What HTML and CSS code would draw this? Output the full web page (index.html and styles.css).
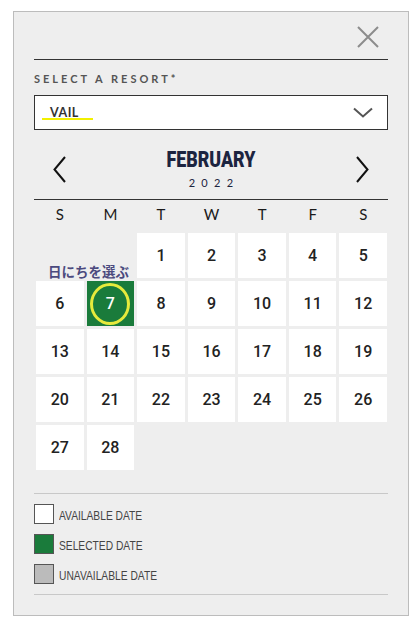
FILE: index.html
```html
<!DOCTYPE html>
<html lang="en">
<head>
<meta charset="utf-8">
<title>Select a resort</title>
<link rel="stylesheet" href="styles.css">
</head>
<body>
<div class="panel">
  <div class="topbar">
    <button class="close" aria-label="Close">
      <svg width="22" height="22" viewBox="0 0 22 22"><path d="M1 1 L21 21 M21 1 L1 21" stroke="#8c8c8c" stroke-width="2" fill="none"/></svg>
    </button>
  </div>
  <div class="label">SELECT A RESORT*</div>
  <div class="select">
    <span class="select-value">VAIL</span>
    <span class="mark"></span>
    <svg class="chev" width="20" height="11" viewBox="0 0 20 11"><polyline points="1,1.5 10,9.5 19,1.5" stroke="#555" stroke-width="2" fill="none"/></svg>
  </div>
  <div class="cal-head">
    <svg class="arrow" width="13" height="27" viewBox="0 0 13 27"><polyline points="12,1 1.5,13.5 12,26" stroke="#111" stroke-width="2" fill="none"/></svg>
    <div class="title">
      <div class="month">FEBRUARY</div>
      <div class="year">2022</div>
    </div>
    <svg class="arrow" width="13" height="27" viewBox="0 0 13 27"><polyline points="1,1 11.5,13.5 1,26" stroke="#111" stroke-width="2" fill="none"/></svg>
  </div>
  <div class="dow">
    <span>S</span><span>M</span><span>T</span><span>W</span><span>T</span><span>F</span><span>S</span>
  </div>
  <div class="grid">
    <div class="cell empty"><span class="note">日にちを選ぶ</span></div>
    <div class="cell empty"></div>
    <div class="cell">1</div><div class="cell">2</div><div class="cell">3</div><div class="cell">4</div><div class="cell">5</div>
    <div class="cell">6</div>
    <div class="cell selected">7<span class="ring"></span></div>
    <div class="cell">8</div><div class="cell">9</div><div class="cell">10</div><div class="cell">11</div><div class="cell">12</div>
    <div class="cell">13</div><div class="cell">14</div><div class="cell">15</div><div class="cell">16</div><div class="cell">17</div><div class="cell">18</div><div class="cell">19</div>
    <div class="cell">20</div><div class="cell">21</div><div class="cell">22</div><div class="cell">23</div><div class="cell">24</div><div class="cell">25</div><div class="cell">26</div>
    <div class="cell">27</div><div class="cell">28</div>
  </div>
  <div class="legend">
    <div class="item"><span class="box avail"></span><span class="ltext">AVAILABLE DATE</span></div>
    <div class="item"><span class="box sel"></span><span class="ltext">SELECTED DATE</span></div>
    <div class="item"><span class="box unavail"></span><span class="ltext">UNAVAILABLE DATE</span></div>
  </div>
</div>
</body>
</html>
```
FILE: styles.css
```css
* { box-sizing: border-box; }
html, body { margin: 0; padding: 0; background: #fff; }
body { padding: 11px 0 0 13px; font-family: Lato, "Noto Sans", sans-serif; }

.panel {
  width: 396px;
  border: 1px solid #bcbcbc;
  background: #eeeeee;
  padding: 0 20px 20px 20px;
}

.topbar {
  height: 48px;
  border-bottom: 1px solid #333;
  display: flex;
  justify-content: flex-end;
  align-items: center;
  padding-top: 2px;
}
.close {
  border: 0;
  background: none;
  padding: 0;
  margin-right: 9px;
  width: 22px;
  height: 22px;
  display: block;
}
.close svg { display: block; }

.label {
  margin-top: 12px;
  font-size: 11px;
  line-height: 13px;
  letter-spacing: 3px;
  color: #555;
  font-weight: 700;
}

.select {
  position: relative;
  margin-top: 10px;
  height: 35px;
  border: 1px solid #333;
  background: #fff;
  display: flex;
  align-items: center;
  justify-content: space-between;
  padding: 0 14px 0 15px;
}
.select-value {
  font-size: 12.5px;
  font-weight: 700;
  color: #333;
  letter-spacing: 0.5px;
}
.mark {
  position: absolute;
  left: 7px;
  top: 22px;
  width: 51px;
  height: 2px;
  background: #f2f000;
}
.chev { display: block; }

.cal-head {
  display: flex;
  align-items: center;
  justify-content: space-between;
  padding: 18px 19px 10px 19px;
  border-bottom: 1px solid #333;
}
.arrow { display: block; margin-top: 2px; }
.title { text-align: center; }
.month {
  display: inline-block;
  font-family: Roboto, "Liberation Sans", sans-serif;
  font-weight: 900;
  font-size: 22px;
  line-height: 24px;
  color: #1c2440;
  transform: scaleX(0.81);
}
.year {
  margin-top: 4px;
  font-size: 11px;
  line-height: 13px;
  letter-spacing: 6.3px;
  padding-left: 6px;
  color: #1c2440;
}

.dow {
  display: grid;
  grid-template-columns: repeat(7, 1fr);
  column-gap: 3px;
  margin: 0 1px 0 2px;
  padding-top: 5px;
  font-size: 15px;
  line-height: 18px;
  color: #1a1a1a;
  text-align: center;
}

.grid {
  margin: 10px 1px 0 2px;
  display: grid;
  grid-template-columns: repeat(7, 1fr);
  grid-auto-rows: 45px;
  gap: 3px;
}
.cell {
  background: #fff;
  display: flex;
  align-items: center;
  justify-content: center;
  font-family: Roboto, "Liberation Sans", sans-serif;
  font-weight: 500;
  font-size: 16px;
  color: #222;
  position: relative;
}
.cell.empty { background: transparent; }
.cell.selected { background: #1a7b3b; color: #fff; }
.ring {
  position: absolute;
  left: 50%;
  top: 50%;
  width: 40px;
  height: 42px;
  margin: -21px 0 0 -20px;
  border: 3px solid #e6ea3c;
  border-radius: 50%;
}
.note {
  position: absolute;
  left: 12px;
  top: 28px;
  white-space: nowrap;
  font-family: "Noto Sans CJK JP", sans-serif;
  font-weight: 700;
  font-size: 13.5px;
  color: #4b4a7e;
}

.legend {
  margin-top: 23px;
  border-top: 1px solid #c8c8c8;
  border-bottom: 1px solid #c8c8c8;
  padding: 10px 0 10px 0;
  display: flex;
  flex-direction: column;
  gap: 10px;
}
.item {
  display: flex;
  align-items: center;
  gap: 5px;
  height: 20px;
}
.box {
  width: 20px;
  height: 20px;
  border: 1px solid #555;
  display: block;
  flex: none;
}
.box.avail { background: #fff; }
.box.sel { background: #1a7b3b; }
.box.unavail { background: #bbbbbb; }
.ltext {
  display: inline-block;
  font-family: "Liberation Sans", Arial, sans-serif;
  font-size: 12.5px;
  color: #444;
  padding-top: 3px;
  transform: scaleX(0.82);
  transform-origin: left center;
}
```
